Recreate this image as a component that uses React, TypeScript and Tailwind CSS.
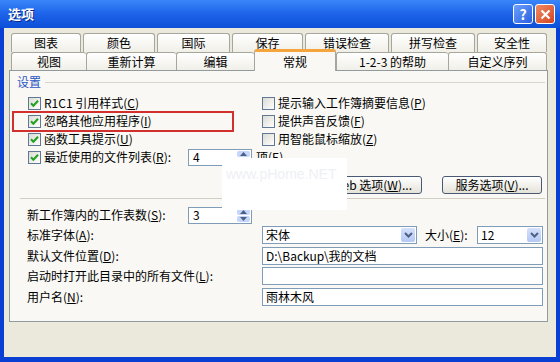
import React from "react";

// XP style "选项" dialog (Excel options, 常规 tab)

const Key = ({ k }: { k: string }) => (
  <>
    (<span className="underline">{k}</span>)
  </>
);

const Check = ({ checked }: { checked?: boolean }) => (
  <span className="w-[13px] h-[13px] shrink-0 border border-[#5f7895] bg-gradient-to-br from-[#dcdbd3] to-white flex items-center justify-center">
    {checked && (
      <svg width="9" height="9" viewBox="0 0 9 9">
        <path d="M1 4.3 L3.4 6.8 L8 1.8" fill="none" stroke="#21a121" strokeWidth="2" />
      </svg>
    )}
  </span>
);

const Arrow = ({ up }: { up?: boolean }) => (
  <svg width="7" height="4" viewBox="0 0 7 4">
    <path d={up ? "M0 4 L3.5 0 L7 4Z" : "M0 0 L3.5 4 L7 0Z"} fill="#4d6185" />
  </svg>
);

const Spin = ({ value }: { value: string }) => (
  <div className="w-[64px] h-[17px] shrink-0 border border-[#7f9db9] bg-white flex items-center">
    <span className="flex-1 pl-[4px] text-[12px] leading-[14px]">{value}</span>
    <div className="w-[15px] h-full flex flex-col gap-px p-px">
      <div className="flex-1 rounded-[2px] bg-[#c6d5fa] flex items-center justify-center">
        <Arrow up />
      </div>
      <div className="flex-1 rounded-[2px] bg-[#c6d5fa] flex items-center justify-center">
        <Arrow />
      </div>
    </div>
  </div>
);

const Combo = ({ value, className }: { value: string; className: string }) => (
  <div className={`${className} h-[18px] shrink-0 border border-[#7f9db9] bg-white flex items-center`}>
    <span className="flex-1 pl-[3px] text-[12px] leading-[14px]">{value}</span>
    <div className="w-[16px] h-full p-px">
      <div className="h-full rounded-[2px] bg-gradient-to-b from-[#d6e1fb] to-[#b3c8f5] flex items-center justify-center">
        <svg width="9" height="6" viewBox="0 0 9 6">
          <path d="M1 1 L4.5 4.5 L8 1" fill="none" stroke="#4d6185" strokeWidth="2" />
        </svg>
      </div>
    </div>
  </div>
);

const Field = ({ value }: { value?: string }) => (
  <div className="w-[281px] h-[18px] shrink-0 border border-[#7f9db9] bg-white flex items-center pl-[3px] text-[12px] leading-[14px]">
    {value}
  </div>
);

const XpButton = ({ children }: { children: React.ReactNode }) => (
  <div className="w-[100px] h-[18px] shrink-0 rounded-[3px] border border-[#4a5a74] bg-gradient-to-b from-white to-[#e4e2d8] flex items-center justify-center text-[12px] leading-[14px] whitespace-nowrap">
    {children}
  </div>
);

const BackTab = ({ label, className }: { label: string; className: string }) => (
  <div
    className={`${className} h-[19px] border border-b-0 border-[#a7a69c] rounded-t-[3px] bg-gradient-to-b from-white to-[#f0efe8] flex items-center justify-center text-[12px] leading-[14px]`}
  >
    {label}
  </div>
);

const FrontTab = ({ label, className }: { label: string; className: string }) => (
  <div
    className={`${className} h-[18px] border-t border-l border-[#a7a69c] rounded-t-[3px] bg-gradient-to-b from-white to-[#f0efe8] flex items-center justify-center text-[12px] leading-[14px]`}
  >
    {label}
  </div>
);

const LeftCheck = ({ checked, children }: { checked?: boolean; children: React.ReactNode }) => (
  <div className="h-[18px] flex items-center gap-[3px] text-[12px] leading-[14px] whitespace-nowrap">
    <Check checked={checked} />
    <span>{children}</span>
  </div>
);

const App = () => {
  return (
    <div className="w-[560px] h-[362px] flex flex-col bg-[#0a3fd4] overflow-hidden font-['Noto_Sans_CJK_SC','Noto_Sans',sans-serif] text-black">
      {/* title bar */}
      <div className="h-[28px] shrink-0 flex items-center pl-[8px] pr-[5px] bg-gradient-to-b from-[#3a86f8] via-[#1d63ea] to-[#0c4fd8]">
        <span className="text-white font-bold text-[13px] leading-[16px] [text-shadow:1px_1px_0_#0a2a8a]">
          选项
        </span>
        <div className="ml-auto flex gap-[2px]">
          <div className="w-[20px] h-[20px] rounded-[3px] border border-white bg-gradient-to-br from-[#6fa0fb] to-[#2a5ee0] flex items-center justify-center text-white font-bold text-[14px] leading-none">
            ?
          </div>
          <div className="w-[20px] h-[20px] rounded-[3px] border border-white bg-gradient-to-br from-[#f08a62] to-[#d4421c] flex items-center justify-center">
            <svg width="11" height="11" viewBox="0 0 11 11">
              <path d="M1.5 1.5 L9.5 9.5 M9.5 1.5 L1.5 9.5" stroke="white" strokeWidth="2.2" />
            </svg>
          </div>
        </div>
      </div>

      {/* body */}
      <div className="flex-1 mx-[4px] mb-[5px] bg-[#ebe9dc] flex flex-col pl-[5px] pr-[8px] pt-[5px]">
        {/* back row of tabs */}
        <div className="flex gap-[2px] pl-[2px]">
          <BackTab label="图表" className="w-[70px]" />
          <BackTab label="颜色" className="w-[72px]" />
          <BackTab label="国际" className="w-[73px]" />
          <BackTab label="保存" className="w-[71px]" />
          <BackTab label="错误检查" className="w-[84px]" />
          <BackTab label="拼写检查" className="w-[84px]" />
          <BackTab label="安全性" className="w-[70px]" />
        </div>
        {/* front row of tabs */}
        <div className="h-[18px] flex items-start pl-[2px]">
          <FrontTab label="视图" className="w-[75px]" />
          <FrontTab label="重新计算" className="w-[90px]" />
          <FrontTab label="编辑" className="w-[78px]" />
          <div className="relative z-10 w-[82px] h-[22px] -mt-[3px] border-x border-[#a7a69c] border-t-[3px] border-t-[#f4a53c] rounded-t-[3px] bg-[#f9f8f4] flex items-center justify-center text-[12px] leading-[14px]">
            常规
          </div>
          <FrontTab label="1-2-3 的帮助" className="w-[112px]" />
          <div className="w-[99px] h-[18px] border-t border-x border-[#a7a69c] rounded-t-[3px] bg-gradient-to-b from-white to-[#f0efe8] flex items-center justify-center text-[12px] leading-[14px]">
            自定义序列
          </div>
        </div>

        {/* panel */}
        <div className="relative h-[252px] border border-[#919b9c] bg-[#f9f8f4] flex flex-col pt-[4px]">
          <div className="flex items-center pl-[7px] pr-[2px] gap-[4px]">
            <span className="text-[12px] leading-[14px] text-[#2c57c4]">设置</span>
            <div className="flex-1 h-px bg-[#d6d5c8]" />
          </div>

          <div className="flex mt-[5px]">
            <div className="w-[252px] shrink-0 pl-[18px] flex flex-col">
              <LeftCheck checked>
                R1C1 引用样式<Key k="C" />
              </LeftCheck>
              <LeftCheck checked>
                忽略其他应用程序<Key k="I" />
              </LeftCheck>
              <LeftCheck checked>
                函数工具提示<Key k="U" />
              </LeftCheck>
              <div className="h-[18px] flex items-center text-[12px] leading-[14px] whitespace-nowrap">
                <div className="w-[160px] shrink-0 flex items-center gap-[3px]">
                  <Check checked />
                  <span>
                    最近使用的文件列表<Key k="R" />:
                  </span>
                </div>
                <Spin value="4" />
                <span className="ml-[4px] shrink-0">
                  项<Key k="E" />
                </span>
              </div>
            </div>
            <div className="flex flex-col">
              <LeftCheck>
                提示输入工作簿摘要信息<Key k="P" />
              </LeftCheck>
              <LeftCheck>
                提供声音反馈<Key k="F" />
              </LeftCheck>
              <LeftCheck>
                用智能鼠标缩放<Key k="Z" />
              </LeftCheck>
            </div>
          </div>

          <div className="flex justify-end gap-[20px] pr-[5px] mt-[10px]">
            <XpButton>
              Web 选项<Key k="W" />...
            </XpButton>
            <XpButton>
              服务选项<Key k="V" />...
            </XpButton>
          </div>

          <div className="h-px bg-[#d0cfc2] ml-[10px] mr-[2px] mt-[4px]" />

          <div className="flex flex-col pl-[17px] text-[12px] leading-[14px] mt-[7px] whitespace-nowrap">
            <div className="h-[18px] flex items-center">
              <span className="w-[161px] shrink-0">
                新工作簿内的工作表数<Key k="S" />:
              </span>
              <Spin value="3" />
            </div>
            <div className="h-[18px] flex items-center mt-[2px]">
              <span className="w-[235px] shrink-0">
                标准字体<Key k="A" />:
              </span>
              <Combo value="宋体" className="w-[155px]" />
              <span className="ml-[8px] w-[52px] shrink-0">
                大小<Key k="E" />:
              </span>
              <Combo value="12" className="w-[66px]" />
            </div>
            <div className="h-[18px] flex items-center mt-[3px]">
              <span className="w-[235px] shrink-0">
                默认文件位置<Key k="D" />:
              </span>
              <Field value="D:\Backup\我的文档" />
            </div>
            <div className="h-[18px] flex items-center mt-[2px]">
              <span className="w-[235px] shrink-0">
                启动时打开此目录中的所有文件<Key k="L" />:
              </span>
              <Field />
            </div>
            <div className="h-[18px] flex items-center mt-[3px]">
              <span className="w-[235px] shrink-0">
                用户名<Key k="N" />:
              </span>
              <Field value="雨林木风" />
            </div>
          </div>

          {/* annotation box */}
          <div className="absolute left-[2px] top-[40px] w-[222px] h-[21px] border-2 border-[#d2302c]" />
          {/* watermark patch */}
          <div className="absolute left-[212px] top-[87px] w-[125px] h-[52px] bg-white">
            <span className="block mt-[8px] ml-[4px] text-[14px] leading-[16px] text-[#eef0f5] font-['Liberation_Sans',sans-serif]">
              www.pHome.NET
            </span>
          </div>
        </div>
      </div>
    </div>
  );
};

export default App;
